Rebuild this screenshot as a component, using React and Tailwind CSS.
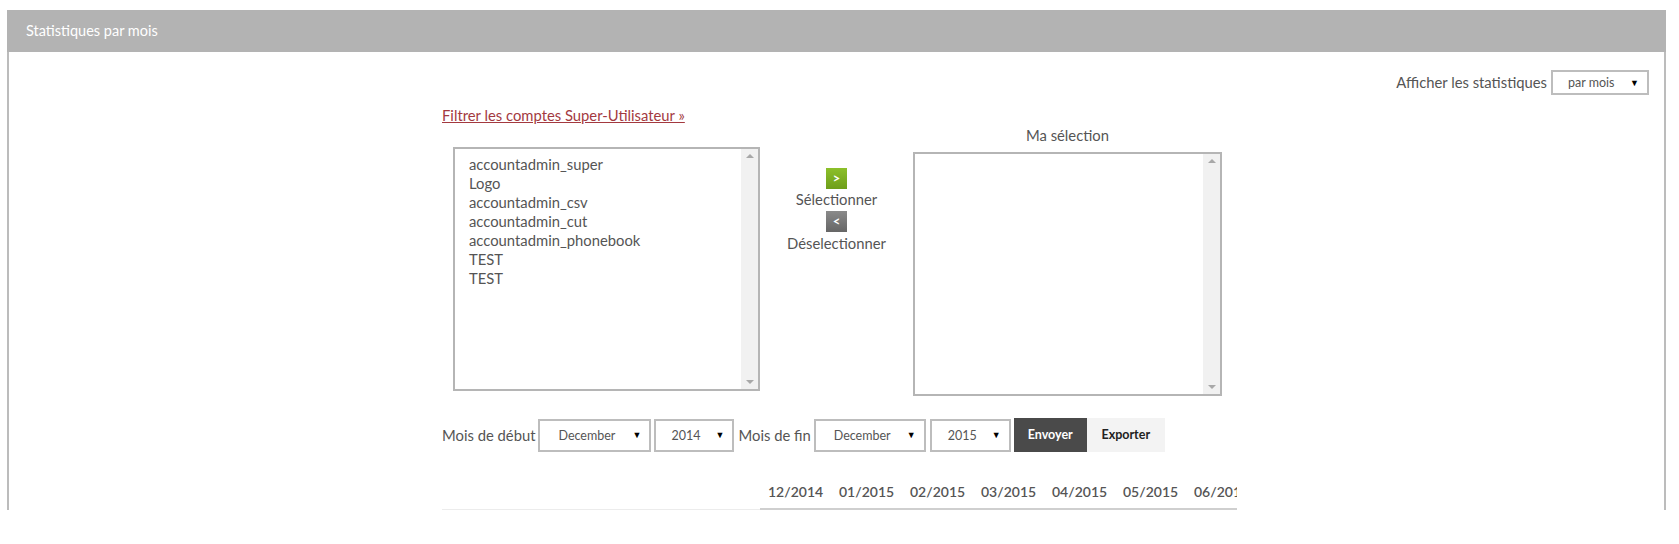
import React from "react";

const accounts = [
  "accountadmin_super",
  "Logo",
  "accountadmin_csv",
  "accountadmin_cut",
  "accountadmin_phonebook",
  "TEST",
  "TEST",
];

const months = ["12/2014", "01/2015", "02/2015", "03/2015", "04/2015", "05/2015", "06/2015"];

// fausse liste déroulante, pour garder la main sur le rendu
const FakeSelect = ({ value, className, padLeft = "pl-[18px]", arrowRight = "pr-[8px]" }) => (
  <div
    className={`flex items-center justify-between border-2 border-[#bdbdbd] bg-white text-[12.5px] text-[#555] ${padLeft} ${arrowRight} ${className}`}
  >
    <span className="pt-[2px]">{value}</span>
    <span className="text-[9px] text-black">▼</span>
  </div>
);

const Scrollbar = () => (
  <div className="flex w-[17px] flex-col items-center justify-between bg-[#f1f1f1] py-[5px]">
    <div className="h-0 w-0 border-x-[4px] border-b-[4px] border-x-transparent border-b-[#a8a8a8]"></div>
    <div className="h-0 w-0 border-x-[4px] border-t-[4px] border-x-transparent border-t-[#a8a8a8]"></div>
  </div>
);

const App = () => {
  return (
    <div className="min-h-[544px] bg-white pt-[10px] font-['Lato',sans-serif]">
      <div className="ml-[7px] w-[1659px]">
        {/* En-tête */}
        <div className="flex h-[42px] items-center bg-[#b3b3b3] pl-[19px] text-[14.5px] text-white">
          Statistiques par mois
        </div>

        <div className="h-[458px] overflow-hidden border-x-2 border-[#bcbcbc]">
          {/* Choix de la période */}
          <div className="flex items-center justify-end pr-[15px] pt-[18px]">
            <span className="mr-[4px] text-[14.8px] text-[#555]">Afficher les statistiques</span>
            <FakeSelect value="par mois" className="h-[25px] w-[98px]" padLeft="pl-[15px]" />
          </div>

          <div className="ml-[433px] w-[795px]">
            <a href="#" className="mt-[10px] block text-[14.8px] leading-[20px] text-[#a3393f] underline">
              Filtrer les comptes Super-Utilisateur »
            </a>

            {/* Listes de comptes */}
            <div className="flex items-start">
              <div className="ml-[11px] mt-[22px] flex h-[244px] w-[307px] border-2 border-[#b5b5b5] bg-white">
                <div className="flex-1 pl-[14px] pt-[6px] text-[14.8px] leading-[19px] text-[#555]">
                  {accounts.map((a, i) => (
                    <div key={i}>{a}</div>
                  ))}
                </div>
                <Scrollbar />
              </div>

              <div className="mt-[43px] flex w-[153px] flex-col items-center text-[14.8px] text-[#555]">
                <button className="flex h-[21px] w-[21px] items-center justify-center bg-gradient-to-b from-[#8cc02a] to-[#6e9e1a] text-[13px] font-bold text-white">
                  &gt;
                </button>
                <span className="leading-[20px]">Sélectionner</span>
                <button className="mt-[2px] flex h-[21px] w-[21px] items-center justify-center bg-gradient-to-b from-[#8a8a8a] to-[#666] text-[13px] font-bold text-white">
                  &lt;
                </button>
                <span className="leading-[22px]">Déselectionner</span>
              </div>

              <div className="w-[309px]">
                <div className="text-center text-[14.8px] leading-[20px] text-[#555]">Ma sélection</div>
                <div className="mt-[7px] flex h-[244px] border-2 border-[#b5b5b5] bg-white">
                  <div className="flex-1"></div>
                  <Scrollbar />
                </div>
              </div>
            </div>

            {/* Dates */}
            <div className="mt-[22px] flex h-[34px] items-center text-[14.8px] text-[#555]">
              <span className="mr-[3px]">Mois de début</span>
              <FakeSelect value="December" className="h-[33px] w-[113px]" />
              <FakeSelect value="2014" className="ml-[3px] h-[33px] w-[80px]" padLeft="pl-[15px]" />
              <span className="ml-[4px] mr-[3px]">Mois de fin</span>
              <FakeSelect value="December" className="h-[33px] w-[112px]" />
              <FakeSelect value="2015" className="ml-[4px] h-[33px] w-[81px]" padLeft="pl-[16px]" />
              <button className="ml-[3px] h-[34px] w-[73px] bg-[#4a4a4a] text-[12.5px] font-bold text-white">
                Envoyer
              </button>
              <button className="h-[34px] w-[78px] bg-[#f3f3f3] text-[12.5px] font-bold text-[#222]">
                Exporter
              </button>
            </div>

            {/* En-tête du tableau */}
            <div className="mt-[30px] flex overflow-hidden whitespace-nowrap text-[14px] font-semibold leading-[20px] text-[#555]">
              <div className="w-[318px] shrink-0 border-b border-[#ececec] pb-[7px]"></div>
              {months.map((m) => (
                <div key={m} className="w-[71px] shrink-0 border-b-2 border-[#cfcfcf] pb-[6px] pl-[8px]">
                  {m}
                </div>
              ))}
            </div>
          </div>
        </div>
      </div>
    </div>
  );
};

export default App;
